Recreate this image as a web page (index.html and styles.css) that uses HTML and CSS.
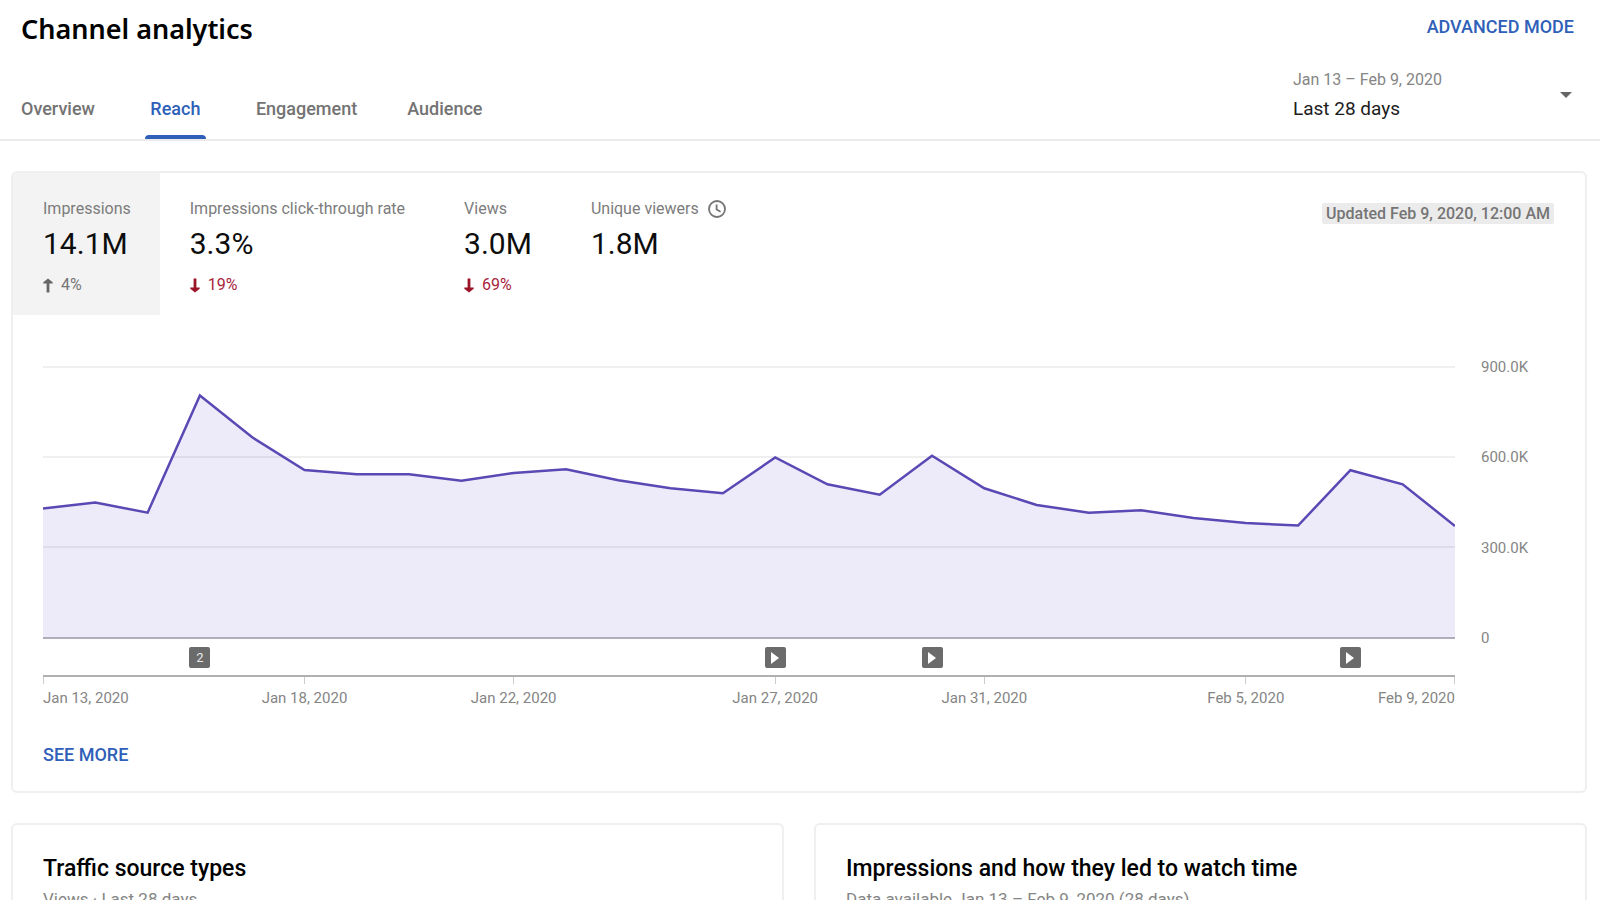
FILE: index.html
```html
<!DOCTYPE html>
<html lang="en">
<head>
<meta charset="utf-8">
<title>Channel analytics</title>
<link rel="stylesheet" href="styles.css">
</head>
<body>
<header class="header">
  <div class="title-row">
    <h1 class="title">Channel analytics</h1>
    <a class="action" href="#advanced">ADVANCED MODE</a>
  </div>
  <div class="tab-row">
    <nav class="tabs" aria-label="Analytics sections">
      <a class="tab" href="#overview">Overview</a>
      <a class="tab tab-active" href="#reach" aria-current="page">Reach</a>
      <a class="tab" href="#engagement">Engagement</a>
      <a class="tab" href="#audience">Audience</a>
    </nav>
    <button class="period" type="button" aria-haspopup="listbox">
      <span class="period-text">
        <span class="period-dates">Jan 13 – Feb 9, 2020</span>
        <span class="period-name">Last 28 days</span>
      </span>
      <svg class="caret" viewBox="0 0 12 6" aria-hidden="true"><path d="M0 0h12L6 6z"/></svg>
    </button>
  </div>
</header>

<main class="main">
  <section class="card chart-card" aria-label="Reach">
    <div class="metrics-row">
      <div class="metrics">
        <button class="metric metric-active" type="button">
          <span class="metric-label">Impressions</span>
          <span class="metric-value">14.1M</span>
          <span class="delta"><svg class="arrow" viewBox="0 0 10 15" aria-hidden="true"><path d="M3.600 14.500V5.400H.3V4.200L5 .6l4.700 3.600v1.200H6.400v9.100z"/></svg>4%</span>
        </button>
        <button class="metric" type="button">
          <span class="metric-label">Impressions click-through rate</span>
          <span class="metric-value">3.3%</span>
          <span class="delta delta-down"><svg class="arrow" viewBox="0 0 10 15" aria-hidden="true"><path d="M3.600 .5v9.100H.3v1.200L5 14.400l4.700-3.600V9.600H6.400V.5z"/></svg>19%</span>
        </button>
        <button class="metric" type="button">
          <span class="metric-label">Views</span>
          <span class="metric-value">3.0M</span>
          <span class="delta delta-down"><svg class="arrow" viewBox="0 0 10 15" aria-hidden="true"><path d="M3.600 .5v9.100H.3v1.200L5 14.400l4.700-3.600V9.600H6.400V.5z"/></svg>69%</span>
        </button>
        <button class="metric" type="button">
          <span class="metric-label">Unique viewers
            <svg class="clock" viewBox="0 0 18 18" aria-hidden="true"><circle cx="9" cy="9" r="8"/><path d="M8.600 4.500V9.400l4 2.400"/></svg>
          </span>
          <span class="metric-value">1.8M</span>
        </button>
      </div>
      <span class="updated">Updated Feb 9, 2020, 12:00 AM</span>
    </div>

    <div class="chart">
      <svg class="plot" viewBox="0 0 1412 274" preserveAspectRatio="none" role="img" aria-label="Impressions per day">
        <path class="grid" d="M0 1H1412M0 91H1412M0 181H1412"/>
        <path class="area" d="M0 142.500 52.300 136.500 104.600 146.700 156.900 29.500 209.200 71.300 261.500 104 313.800 108.300 366.100 108.300 418.400 114.700 470.700 107 523 103.300 575.300 114.300 627.600 122.300 679.900 127.300 732.200 91.500 784.400 118.300 836.700 128.700 889 89.800 941.300 122.300 993.600 139 1045.900 146.700 1098.200 144.200 1150.500 152 1202.800 157 1255.100 159.500 1307.400 104.200 1359.700 118.300 1412 160V273H0Z"/>
        <path class="line" d="M0 142.500 52.300 136.500 104.600 146.700 156.900 29.500 209.200 71.300 261.500 104 313.800 108.300 366.100 108.300 418.400 114.700 470.700 107 523 103.300 575.300 114.300 627.600 122.300 679.900 127.300 732.200 91.500 784.400 118.300 836.700 128.700 889 89.800 941.300 122.300 993.600 139 1045.900 146.700 1098.200 144.200 1150.500 152 1202.800 157 1255.100 159.500 1307.400 104.200 1359.700 118.300 1412 160"/>
        <path class="base" d="M0 272H1412"/>
      </svg>
      <div class="y-axis">
        <span>900.0K</span><span>600.0K</span><span>300.0K</span><span>0</span>
      </div>
      <div class="days markers">
        <div class="day day-3"><button class="marker" type="button">2</button></div>
        <div class="day day-14"><button class="marker" type="button" aria-label="Video published"><svg class="play" viewBox="0 0 8 12"><path d="M0 0l8 6-8 6z"/></svg></button></div>
        <div class="day day-17"><button class="marker" type="button" aria-label="Video published"><svg class="play" viewBox="0 0 8 12"><path d="M0 0l8 6-8 6z"/></svg></button></div>
        <div class="day day-25"><button class="marker" type="button" aria-label="Video published"><svg class="play" viewBox="0 0 8 12"><path d="M0 0l8 6-8 6z"/></svg></button></div>
      </div>
      <div class="days dates">
        <div class="day day-first">Jan 13, 2020</div>
        <div class="day day-5">Jan 18, 2020</div>
        <div class="day day-9">Jan 22, 2020</div>
        <div class="day day-14">Jan 27, 2020</div>
        <div class="day day-18">Jan 31, 2020</div>
        <div class="day day-23">Feb 5, 2020</div>
        <div class="day day-last">Feb 9, 2020</div>
      </div>
    </div>
    <a class="action see-more" href="#more">SEE MORE</a>
  </section>

  <div class="cards">
    <section class="card small-card">
      <h2 class="card-title">Traffic source types</h2>
      <p class="card-sub">Views · Last 28 days</p>
    </section>
    <section class="card small-card">
      <h2 class="card-title">Impressions and how they led to watch time</h2>
      <p class="card-sub">Data available Jan 13 – Feb 9, 2020 (28 days)</p>
    </section>
  </div>
</main>
</body>
</html>
```
FILE: styles.css
```css
* { box-sizing: border-box; }

html { overflow: hidden; }

body {
  margin: 0;
  height: 100vh;
  overflow: hidden;
  background: #fff;
  color: #0d0d0d;
  font-family: Roboto, "Liberation Sans", sans-serif;
  font-size: 16px;
  line-height: 24px;
}

button {
  margin: 0;
  padding: 0;
  border: 0;
  background: none;
  color: inherit;
  font: inherit;
  text-align: left;
  cursor: pointer;
}

a { color: inherit; text-decoration: none; }

.header { border-bottom: 2px solid #ebebeb; }

.title-row {
  display: flex;
  justify-content: space-between;
  padding: 10px 26px 0 21px;
}

.title {
  margin: 0;
  color: #000;
  font-family: "Noto Sans", Roboto, sans-serif;
  font-size: 27px;
  font-weight: 600;
  line-height: 38px;
}

.action {
  color: #2f5fb8;
  font-size: 18px;
  font-weight: 500;
  line-height: 34px;
}

.tab-row {
  display: flex;
  justify-content: space-between;
  height: 91px;
  padding: 0 28px 0 21px;
}

.tabs { display: flex; gap: 50px; }

.tab {
  display: flex;
  justify-content: center;
  padding-top: 49px;
  color: #737373;
  font-size: 18px;
  font-weight: 500;
}

.tab-active {
  position: relative;
  min-width: 61px;
  color: #2f5fb8;
}

.tab-active::after {
  content: "";
  position: absolute;
  right: 0;
  bottom: 0;
  left: 0;
  height: 4px;
  border-radius: 4px 4px 0 0;
  background: #2f5fb8;
}

.period {
  display: flex;
  align-items: center;
  justify-content: space-between;
  width: 279px;
  padding-top: 2px;
}

.period-text { display: flex; flex-direction: column; gap: 5px; }
.period-dates { color: #858585; }
.period-name { color: #1c1c1c; font-size: 19px; }
.caret { width: 12px; height: 6px; fill: #666; }

.main { padding: 30px 13px 0 11px; }

.card {
  border: 2px solid #efefef;
  border-radius: 6px;
}

.chart-card { padding-bottom: 19px; }

.metrics-row {
  display: flex;
  justify-content: space-between;
  align-items: flex-start;
  padding-right: 31px;
}

.metrics { display: flex; }

.metric {
  display: flex;
  flex-direction: column;
  height: 142px;
  padding: 24px 29px 0 30px;
}

.metric-active { background: #f3f3f3; }

.metric-label {
  display: flex;
  align-items: center;
  gap: 9px;
  color: #7c7c7c;
}

.metric-value {
  margin: 3px 0 9px;
  font-size: 30px;
  line-height: 40px;
}

.delta {
  display: flex;
  align-items: center;
  gap: 8px;
  color: #757575;
}

.delta-down { color: #a8243a; }

.arrow {
  width: 10px;
  height: 15px;
  fill: #666;
}

.delta-down .arrow { fill: #9c1428; }

.clock {
  width: 18px;
  height: 18px;
  fill: none;
  stroke: #757575;
  stroke-width: 1.800;
}

.updated {
  margin-top: 30px;
  padding: 1px 4px 0;
  border-radius: 2px;
  background: #ebebeb;
  color: #757575;
  font-weight: 500;
  line-height: 20px;
}

.chart {
  display: grid;
  grid-template-columns: 1fr 74px;
  column-gap: 26px;
  margin: 51px 30px 0;
}

.plot {
  display: block;
  width: 100%;
  height: 274px;
}

.plot path { vector-effect: non-scaling-stroke; }
.grid { fill: none; stroke: #efefef; stroke-width: 2; }
.area { fill: rgba(88, 68, 200, 0.110); }
.line { fill: none; stroke: #5a48b4; stroke-width: 2.500; }
.base { fill: none; stroke: #b0aebc; stroke-width: 2; }

.y-axis {
  display: flex;
  flex-direction: column;
  justify-content: space-between;
  margin: -11px 0 -10px;
  color: #858585;
  font-size: 15px;
}

.days {
  display: grid;
  grid-column: 1;
  grid-template-columns: repeat(27, 1fr);
}

.markers {
  align-items: center;
  height: 37px;
  border-bottom: 2px solid #b0b0b0;
}

.day {
  display: flex;
  grid-row: 1;
  justify-content: center;
  width: 0;
  white-space: nowrap;
}

.day-first { grid-column: 1; justify-content: flex-start; }
.day-3 { grid-column: 4; }
.day-5 { grid-column: 6; }
.day-9 { grid-column: 10; }
.day-14 { grid-column: 15; }
.day-17 { grid-column: 18; }
.day-18 { grid-column: 19; }
.day-23 { grid-column: 24; }
.day-25 { grid-column: 26; }
.day-last { grid-column: 27; justify-content: flex-end; justify-self: end; }

.marker {
  display: flex;
  flex: none;
  align-items: center;
  justify-content: center;
  width: 21px;
  height: 21px;
  border-radius: 2px;
  background: #6b6b6b;
  color: #e8e8e8;
  font-size: 13px;
}

.play { width: 8px; height: 12px; fill: #fff; }

.dates { color: #858585; font-size: 15px; }

.dates .day {
  flex-direction: column;
  align-items: center;
}

.dates .day::before {
  content: "";
  width: 1px;
  height: 7px;
  margin-bottom: 2px;
  background: #ccc;
}

.dates .day-first { align-items: flex-start; }
.dates .day-last { align-items: flex-end; }

.see-more { display: inline-block; margin: 28px 30px 0; }

.cards {
  display: grid;
  grid-template-columns: 1fr 1fr;
  gap: 30px;
  margin-top: 30px;
}

.small-card { padding: 28px 30px 24px; }

.card-title {
  margin: 0;
  color: #000;
  font-size: 23px;
  font-weight: 500;
  line-height: 32px;
}

.card-sub {
  margin: 2px 0 0;
  color: #858585;
  font-size: 17px;
}
```
